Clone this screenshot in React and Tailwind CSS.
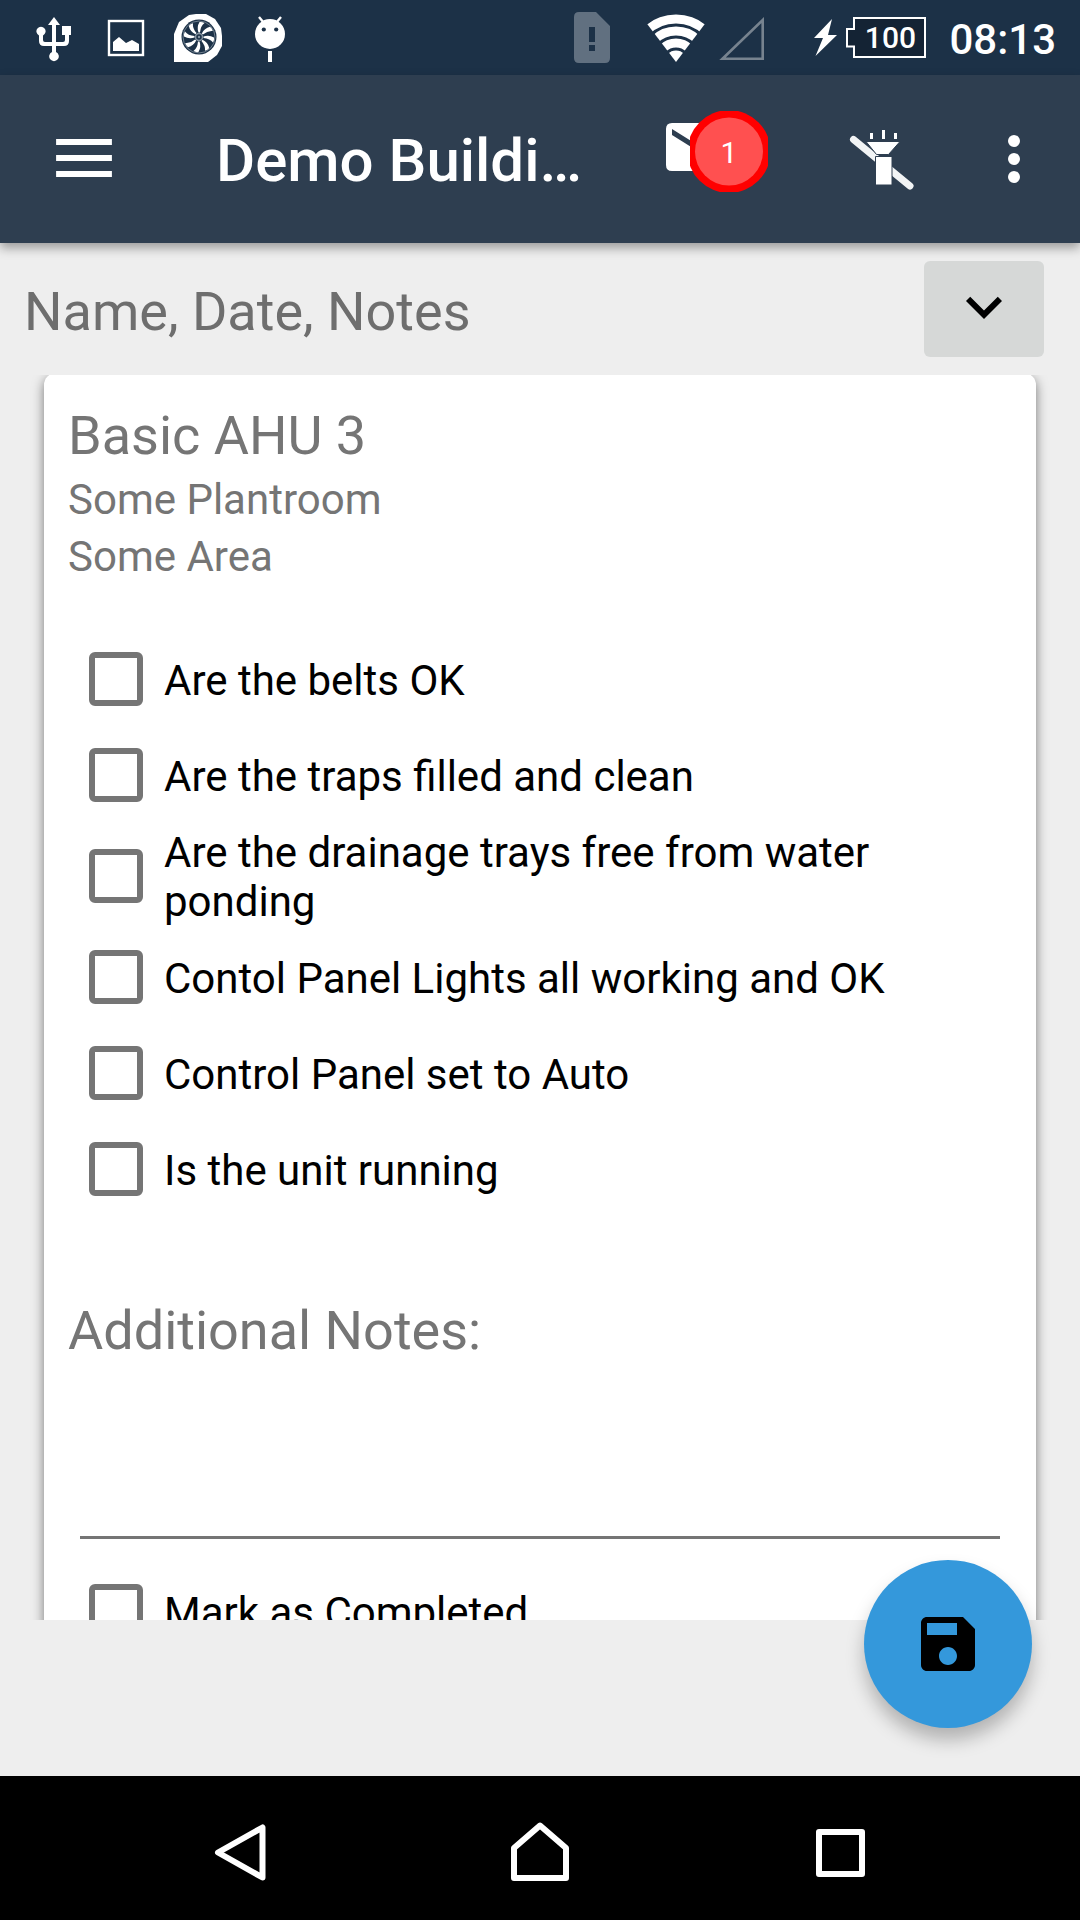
import React from "react";

const checks = [
  "Are the belts OK",
  "Are the traps filled and clean",
  "Are the drainage trays free from water ponding",
  "Contol Panel Lights all working and OK",
  "Control Panel set to Auto",
  "Is the unit running",
];

function UsbIcon() {
  return (
    <svg className="size-12" viewBox="0 0 48 48" fill="#fff" aria-hidden="true">
      <path d="M24 3l6 8h-4v17h7q2 0 2-2v-5h-3v-9h9v9h-2v6q0 5-5 5h-8v6a4.800 4.800 0 1 1-4 0v-6h-8q-5 0-5-5v-5.600a4.600 4.600 0 1 1 4 0v4.600q0 2 2 2h7V11h-4z" />
    </svg>
  );
}

function PictureIcon() {
  return (
    <svg className="size-12" viewBox="0 0 48 48" fill="none" aria-hidden="true">
      <rect x="7" y="7" width="34" height="34" stroke="#fff" strokeWidth="2.400" />
      <path d="M11 37v-9l6-5 7 6 6-3 7 4v7z" fill="#fff" />
    </svg>
  );
}

function FanIcon() {
  const blades = [0, 45, 90, 135, 180, 225, 270, 315];
  return (
    <svg className="size-12" viewBox="0 0 48 48" aria-hidden="true">
      <path d="M0 48V20L5 8 15 1 22 0h10L41 5l6 9 1 8v10l-5 9-9 7z" fill="#fff" />
      <circle cx="25" cy="23" r="17.500" fill="#1c3147" />
      <circle cx="25" cy="23" r="16" fill="none" stroke="#6f7f8e" strokeWidth="1" />
      {blades.map((a) => (
        <path key={a} transform={`rotate(${a} 25 23)`} d="M24.500 18.500q-2-5.500 1-10.500 2.500-.5 5 1-4 3-4.500 9.500z" fill="#fff" />
      ))}
      <circle cx="25" cy="23" r="3.500" fill="#1c3147" stroke="#8593a0" strokeWidth="1.500" />
      <circle cx="25" cy="23" r="1.200" fill="#8593a0" />
    </svg>
  );
}

function BugIcon() {
  return (
    <svg className="size-12" viewBox="0 0 48 48" aria-hidden="true">
      <path d="M13 3l5 6M35 3l-5 6" stroke="#fff" strokeWidth="2.400" />
      <circle cx="24" cy="20" r="15" fill="#fff" />
      <circle cx="17.800" cy="15.500" r="2.100" fill="#1c3147" />
      <circle cx="30.200" cy="15.500" r="2.100" fill="#1c3147" />
      <path d="M22 37h4v11h-4z" fill="#fff" />
    </svg>
  );
}

function StatusBar() {
  return (
    <div className="flex h-[75px] shrink-0 items-center bg-[#1c3147] pr-6 pl-[30px] text-white">
      <div className="flex flex-1 gap-6">
        <UsbIcon />
        <PictureIcon />
        <FanIcon />
        <BugIcon />
      </div>
      <svg className="h-[51px] w-9" viewBox="0 0 36 51" aria-hidden="true">
        <path fillRule="evenodd" fill="#617080" d="M5 0h17l14 14v32q0 5-5 5H5q-5 0-5-5V5q0-5 5-5zM15 15v15h6V15zM15 33v6h6v-6z" />
      </svg>
      <svg className="ml-9 h-12 w-[60px]" viewBox="0 0 60 48" aria-hidden="true">
        <clipPath id="wifi-wedge">
          <path d="M30 48L-5 2V-5H65V2z" />
        </clipPath>
        <g clipPath="url(#wifi-wedge)" fill="none" stroke="#fff">
          <circle cx="30" cy="48" r="11.500" fill="#fff" stroke="none" />
          <circle cx="30" cy="48" r="19" strokeWidth="9" />
          <circle cx="30" cy="48" r="31" strokeWidth="9" />
          <circle cx="30" cy="48" r="43" strokeWidth="9" />
        </g>
      </svg>
      <svg className="ml-3 h-12 w-12" viewBox="0 0 48 48" fill="none" stroke="#77838f" strokeWidth="2.600" aria-hidden="true">
        <path d="M4.500 44.800H44.700V6z" />
      </svg>
      <svg className="ml-12 h-10 w-6" viewBox="0 0 24 40" fill="#fff" aria-hidden="true">
        <path d="M18 1L0 20h9L1.500 38 23 17h-9z" />
      </svg>
      <div className="relative ml-2 flex h-[42px] w-20 items-center justify-center pl-2">
        <svg className="absolute inset-0 size-full" viewBox="0 0 80 42" fill="#142334" stroke="#fff" strokeWidth="2" aria-hidden="true">
          <path d="M8 1h71v39H8V29.500H1V12h7z" />
        </svg>
        <span className="relative text-[30px] leading-[34px] font-medium">100</span>
      </div>
      <time className="ml-[23px] pt-1 text-[42px] leading-[48px] font-medium">08:13</time>
    </div>
  );
}

function AppBar() {
  return (
    <header className="relative z-10 flex h-[168px] shrink-0 items-center bg-[#2e3e50] pr-[30px] text-white shadow-[0_5px_10px_rgba(0,0,0,0.35)]">
      <button type="button" aria-label="Open menu" className="flex h-full w-[168px] shrink-0 items-center justify-center">
        <svg className="size-[72px]" viewBox="0 0 24 24" fill="#fff" aria-hidden="true">
          <path d="M2.700 18h18.600v-2H2.700v2zm0-5.300h18.600v-2H2.700v2zm0-7.400v2h18.600v-2H2.700z" />
        </svg>
      </button>
      <h1 className="ml-12 flex-1 pt-1 text-[60px] leading-[72px] font-medium whitespace-nowrap">Demo Buildi…</h1>
      <button type="button" aria-label="Messages, 1 unread" className="relative h-[96px] w-[108px] shrink-0">
        <svg className="size-full" viewBox="0 0 108 96" aria-hidden="true">
          <path fill="#fff" fillRule="evenodd" d="M12 12h48q6 0 6 6v36q0 6-6 6H12q-6 0-6-6V18q0-6 6-6zM12 18v6l24 15 24-15v-6L36 33z" />
          <clipPath id="badge-edge">
            <rect x="30" y="0" width="78" height="81" />
          </clipPath>
          <g clipPath="url(#badge-edge)">
            <circle cx="69" cy="40.500" r="41.500" fill="#f00" />
            <circle cx="69" cy="40.500" r="34" fill="#ff5050" />
          </g>
        </svg>
        <span className="absolute top-0 left-[30px] flex h-[82px] w-[78px] items-center justify-center text-[30px]">1</span>
      </button>
      <button type="button" aria-label="Turn flashlight off" className="ml-[60px] h-[72px] w-[96px] shrink-0">
        <svg className="size-full" viewBox="0 0 96 72" fill="#fff" aria-hidden="true">
          <path d="M25.500 16.500L82 63" stroke="#f2f4f5" strokeWidth="7" strokeLinecap="round" />
          <path d="M38 18.500h34L60.500 31.500h-12z" stroke="#2e3e50" strokeWidth="1" />
          <path d="M47.500 33.500h16.500V62H47.500z" stroke="#2e3e50" strokeWidth="1" />
          <path d="M42 10h3v6h-3zM54 7h3v9h-3zM66 10h3v6h-3z" />
        </svg>
      </button>
      <button type="button" aria-label="More options" className="ml-[54px] h-[72px] w-[72px] shrink-0">
        <svg className="size-full" viewBox="0 0 72 72" fill="#fff" aria-hidden="true">
          <circle cx="36" cy="18" r="6" />
          <circle cx="36" cy="36" r="6" />
          <circle cx="36" cy="54" r="6" />
        </svg>
      </button>
    </header>
  );
}

function CheckRow({ label }) {
  return (
    <label className="flex min-h-24 items-center py-[3px] text-[42px] leading-[49px] text-black">
      <input
        type="checkbox"
        className="mr-[21px] ml-[21px] size-[54px] shrink-0 appearance-none rounded-[6px] border-[6px] border-[#757575] bg-white checked:bg-[#757575]"
      />
      <span className="pt-0.5">{label}</span>
    </label>
  );
}

function NavBar() {
  return (
    <nav className="flex h-36 shrink-0 items-center justify-center bg-black pt-2">
      <button type="button" aria-label="Back" className="flex h-full w-[300px] items-center justify-center">
        <svg className="size-[72px]" viewBox="0 0 72 72" fill="none" stroke="#fff" strokeWidth="6" strokeLinejoin="round" aria-hidden="true">
          <path d="M58.500 11.500v50L14 36.500z" />
        </svg>
      </button>
      <button type="button" aria-label="Home" className="flex h-full w-[300px] items-center justify-center">
        <svg className="size-[72px]" viewBox="0 0 72 72" fill="none" stroke="#fff" strokeWidth="6" strokeLinejoin="round" aria-hidden="true">
          <path d="M10 62V32L36 9.500 62 32v30z" />
        </svg>
      </button>
      <button type="button" aria-label="Recent apps" className="flex h-full w-[300px] items-center justify-center">
        <svg className="size-[72px]" viewBox="0 0 72 72" fill="none" stroke="#fff" strokeWidth="6" strokeLinejoin="round" aria-hidden="true">
          <path d="M15 16h43v42H15z" />
        </svg>
      </button>
    </nav>
  );
}

export default function App() {
  return (
    <div className="flex h-screen flex-col overflow-hidden bg-[#eeeeee] font-['Roboto',sans-serif]">
      <StatusBar />
      <AppBar />
      <main className="relative flex min-h-0 flex-1 flex-col pb-[156px]">
        <div className="flex h-[132px] shrink-0 items-center justify-between pr-9 pl-6">
          <h2 className="pt-1.5 text-[54px] leading-[64px] text-[#6e6e6e]">Name, Date, Notes</h2>
          <button type="button" aria-label="Expand name, date and notes" className="flex h-24 w-[120px] items-center justify-center rounded-[6px] bg-[#d6d8d7] pb-1">
            <svg className="size-[72px]" viewBox="0 0 24 24" aria-hidden="true">
              <path d="M16.590 8.590L12 13.170 7.410 8.590 6 10l6 6 6-6z" />
            </svg>
          </button>
        </div>
        <div className="min-h-0 flex-1 overflow-hidden px-11">
          <form className="-mt-0.5 rounded-xl bg-white px-6 pt-[31px] pb-6 text-[#757575] shadow-[0_4px_12px_rgba(0,0,0,0.5)]">
            <h3 className="text-[54px] leading-[64px]">Basic AHU 3</h3>
            <p className="mt-[3px] text-[42px] leading-[57px]">Some Plantroom</p>
            <p className="text-[42px] leading-[57px]">Some Area</p>
            <div className="mt-[46px]">
              {checks.map((c) => (
                <CheckRow key={c} label={c} />
              ))}
            </div>
            <label htmlFor="notes" className="mt-[82px] block text-[54px] leading-[64px]">
              Additional Notes:
            </label>
            <div className="px-3">
              <textarea id="notes" className="block h-44 w-full resize-none border-b-[3px] border-[#757575] text-[42px] text-black outline-none" />
            </div>
            <div className="mt-6">
              <CheckRow label="Mark as Completed" />
            </div>
          </form>
        </div>
        <button
          type="button"
          aria-label="Save"
          className="absolute right-12 bottom-12 flex size-[168px] items-center justify-center rounded-full bg-[#3498db] shadow-[0_12px_18px_rgba(0,0,0,0.25)]"
        >
          <svg className="size-[72px]" viewBox="0 0 24 24" aria-hidden="true">
            <path d="M17 3H5c-1.110 0-2 .9-2 2v14c0 1.100.89 2 2 2h14c1.100 0 2-.9 2-2V7l-4-4zm-5 16c-1.660 0-3-1.340-3-3s1.340-3 3-3 3 1.340 3 3-1.340 3-3 3zm3-10H5V5h10v4z" />
          </svg>
        </button>
      </main>
      <NavBar />
    </div>
  );
}
